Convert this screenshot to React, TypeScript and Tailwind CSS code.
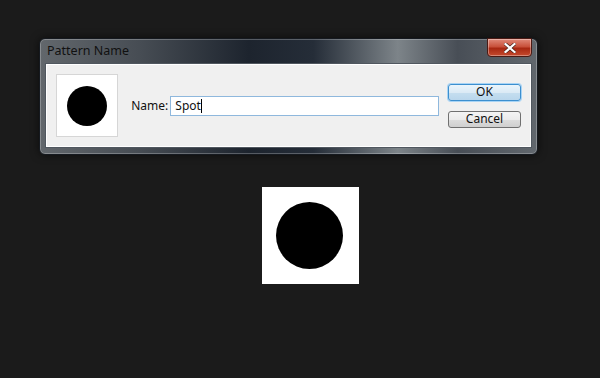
import React from "react";

export default function App() {
  const font = { fontFamily: '"Noto Sans", "Open Sans", Arial, sans-serif' };
  return (
    <div className="w-[600px] h-[378px] bg-[#1b1b1b] flex flex-col overflow-hidden" style={font}>
      <div className="ml-[39px] mt-[38px] w-[499px] h-[117px] rounded-[6px] border border-[#15191f] bg-[linear-gradient(90deg,#62676c_0%,#474d54_20%,#1d242e_42%,#252d38_55%,#7d8489_72%,#484e56_84%,#62686e_100%)] px-[5px] pb-[6px] flex flex-col shadow-[0_0_8px_rgba(0,0,0,0.6),inset_0_0_0_1px_rgba(255,255,255,0.25)]">
        <div className="h-[24px] flex items-start justify-between">
          <span className="mt-[5px] ml-[2px] text-[12.5px] leading-[14px] text-[#111]">Pattern Name</span>
          <div className="-mt-[1px] w-[45px] h-[19px] rounded-b-[4px] border border-[#4a1a14] bg-[linear-gradient(180deg,#e08a7a_0%,#c8503a_45%,#a82812_55%,#c54a2e_100%)] flex items-center justify-center shadow-[inset_0_0_0_1px_rgba(255,255,255,0.35)]">
            <svg width="12" height="10" viewBox="0 0 12 10">
              <path d="M1.5 1 L10.5 9 M10.5 1 L1.5 9" stroke="#3a1a14" strokeWidth="3.4" strokeLinecap="square" />
              <path d="M1.5 1 L10.5 9 M10.5 1 L1.5 9" stroke="#ffffff" strokeWidth="2.2" strokeLinecap="square" />
            </svg>
          </div>
        </div>
        <div className="flex-1 border border-[#50575f] bg-[#f0f0f0] shadow-[inset_0_0_0_1px_#ffffff] flex items-center pl-[10px] pr-[10px]">
          <div className="w-[63px] h-[63px] bg-white border border-[#d6d6d6] flex items-center justify-center">
            <div className="w-[40px] h-[40px] rounded-full bg-black" />
          </div>
          <span className="ml-[13px] text-[12px] text-[#111]">Name:</span>
          <div className="ml-[2px] w-[272px] h-[20px] bg-white border border-[#8fb8dd] flex items-center pl-[4px] text-[12px] text-[#111]">
            Spot<span className="inline-block w-[1px] h-[14px] bg-black" />
          </div>
          <div className="ml-[9px] flex flex-col gap-[10px]">
            <div className="w-[73px] h-[17px] rounded-[3px] border border-[#3c8fcf] bg-[linear-gradient(180deg,#eaf5fc_0%,#dbeaf5_50%,#c5deef_51%,#b9d6ec_100%)] shadow-[0_0_0_1px_#a8d4f5] flex items-center justify-center text-[12px] text-[#111]">
              OK
            </div>
            <div className="w-[73px] h-[17px] rounded-[3px] border border-[#707070] bg-[linear-gradient(180deg,#f4f4f4_0%,#ebebeb_50%,#dddddd_51%,#cfcfcf_100%)] flex items-center justify-center text-[12px] text-[#111]">
              Cancel
            </div>
          </div>
        </div>
      </div>
      <div className="ml-[262px] mt-[32px] w-[97px] h-[97px] bg-white flex items-center justify-center">
        <div className="w-[67px] h-[67px] rounded-full bg-black blur-[0.6px] -ml-[3px]" />
      </div>
    </div>
  );
}
